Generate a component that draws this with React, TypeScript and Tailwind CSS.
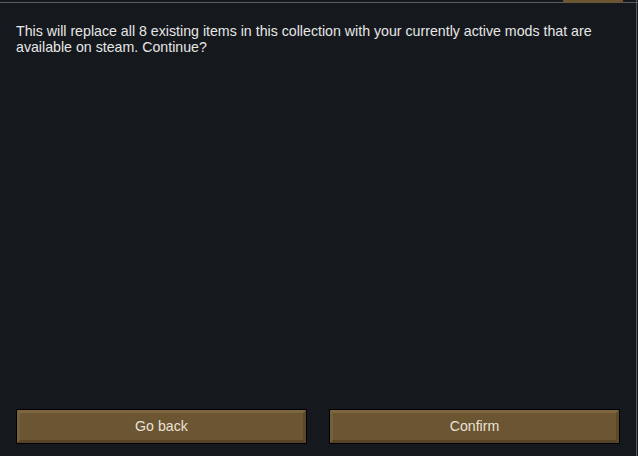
import React from 'react'

function BevelButton({ label }: { label: string }) {
  return (
    <button className="flex-1 h-[35px] border border-black bg-[#6c5532] relative">
      <div className="absolute inset-0 border-t-[3px] border-l-[3px] border-b-[3px] border-r-[3px] border-t-[#7e6640] border-l-[#75603c] border-b-[#574427] border-r-[#5c482a]" />
      <span className="relative -top-px text-[14.2px] text-[#e8e2d6] font-['Liberation_Sans',Arial,sans-serif]">{label}</span>
    </button>
  )
}

export default function App() {
  return (
    <div className="w-[638px] h-[456px] bg-[#15191d] flex flex-col relative overflow-hidden font-['Liberation_Sans',Arial,sans-serif]">
      {/* top edge line with tab */}
      <div className="flex h-[3px] shrink-0">
        <div className="w-[563px] border-b border-[#5b5e61]" />
        <div className="w-[60px] bg-[#6c5532]" />
        <div className="flex-1 border-b border-[#5b5e61]" />
      </div>
      <div className="absolute right-[1px] top-0 bottom-0 w-px bg-[#5b5e61]" />

      <div className="flex-1 flex flex-col pl-4 pr-[18px] pt-[20px] pb-[12px]">
        <p className="text-[14.2px] leading-[16px] text-[#e6e6e6] pr-4">
          This will replace all 8 existing items in this collection with your currently active mods that are available on steam. Continue?
        </p>
        <div className="flex-1" />
        <div className="flex gap-[22px]">
          <BevelButton label="Go back" />
          <BevelButton label="Confirm" />
        </div>
      </div>
    </div>
  )
}
